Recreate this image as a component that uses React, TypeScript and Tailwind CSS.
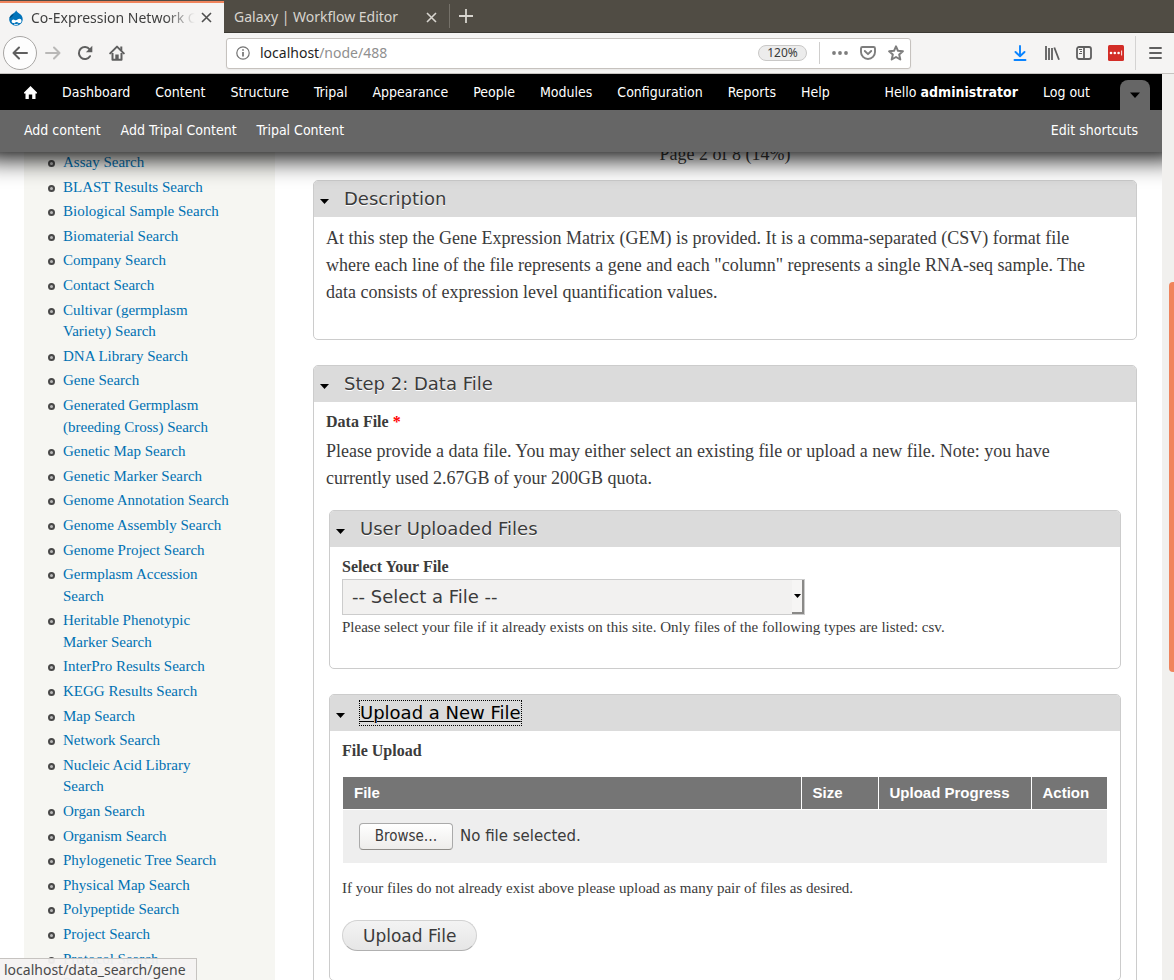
import type { ReactNode } from "react";

const ADMIN_LINKS = [
  "Dashboard",
  "Content",
  "Structure",
  "Tripal",
  "Appearance",
  "People",
  "Modules",
  "Configuration",
  "Reports",
  "Help",
];

const SHORTCUTS = ["Add content", "Add Tripal Content", "Tripal Content"];

const SEARCHES = [
  "Assay Search",
  "BLAST Results Search",
  "Biological Sample Search",
  "Biomaterial Search",
  "Company Search",
  "Contact Search",
  "Cultivar (germplasm Variety) Search",
  "DNA Library Search",
  "Gene Search",
  "Generated Germplasm (breeding Cross) Search",
  "Genetic Map Search",
  "Genetic Marker Search",
  "Genome Annotation Search",
  "Genome Assembly Search",
  "Genome Project Search",
  "Germplasm Accession Search",
  "Heritable Phenotypic Marker Search",
  "InterPro Results Search",
  "KEGG Results Search",
  "Map Search",
  "Network Search",
  "Nucleic Acid Library Search",
  "Organ Search",
  "Organism Search",
  "Phylogenetic Tree Search",
  "Physical Map Search",
  "Polypeptide Search",
  "Project Search",
  "Protocol Search",
  "Publication Search",
];

function CloseIcon() {
  return (
    <svg width="11" height="11" viewBox="0 0 11 11" fill="none" stroke="currentColor" strokeWidth="1.6">
      <path d="M1 1l9 9M10 1l-9 9" />
    </svg>
  );
}

function DrupalIcon() {
  return (
    <svg width="16" height="16" viewBox="0 0 16 16" className="shrink-0">
      <path
        d="M8.2.3c.5 1.6 1.6 2.200 3 3.200 2 1.300 3.500 3 3.500 5.800 0 3.700-3 6.400-6.600 6.400S1.200 13 1.200 9.300c0-2.700 1.500-4.300 3.500-5.500C6.400 2.800 7.600 2 8.200.3z"
        fill="#0073ba"
      />
      <path d="M1.300 8.300c.8-2 2.500-3.500 4.600-4.400-.8 1.900-2.300 3.500-4.600 4.400z" fill="#004975" />
      <path
        d="M11.400 8.800c-1.500 0-2.400 1.400-3.400 1.400-.9 0-1.500-.8-2.500-.8-1.100 0-1.900.8-1.900 1.900 0 1.100.8 1.800 1.900 1.800 1.500 0 2.200-1.200 3.200-1.200s1.500 1.200 2.800 1.200c1.300 0 2-1 2-2.200s-.8-2.100-2.100-2.100z"
        fill="#fff"
      />
      <path d="M6 14c1.300.7 3 .7 4.200 0" stroke="#fff" strokeWidth=".9" fill="none" />
    </svg>
  );
}

function TabBar() {
  return (
    <div className="flex h-[33px] shrink-0 border-b border-[#3b3933] bg-[#504c44]">
      <div className="-mb-px mt-px flex w-56 shrink-0 items-center border-t-2 border-[#f0845c] bg-[#f5f4f3] pb-px pl-2 pr-3 text-[#3f3f3f]">
        <DrupalIcon />
        <span className="ml-[7px] min-w-0 flex-1 overflow-hidden whitespace-nowrap text-sm [mask-image:linear-gradient(to_right,#000_82%,transparent)]">
          Co-Expression Network C
        </span>
        <button aria-label="Close tab" className="ml-1.5 text-[#4f4f4f]">
          <CloseIcon />
        </button>
      </div>
      <div className="flex w-[225px] shrink-0 items-center pl-2.5 pr-3 pt-0.5 text-[#d8d5cf]">
        <span className="flex-1 whitespace-nowrap text-sm">Galaxy | Workflow Editor</span>
        <button aria-label="Close tab">
          <CloseIcon />
        </button>
      </div>
      <div className="my-1 w-px bg-[#757169]" />
      <button aria-label="New tab" className="px-2 text-[#d8d5cf]">
        <svg width="16" height="16" viewBox="0 0 16 16" stroke="currentColor" strokeWidth="1.800">
          <path d="M8 1v14M1 8h14" />
        </svg>
      </button>
    </div>
  );
}

function NavBar() {
  return (
    <div className="flex h-[41px] shrink-0 items-center border-b border-[#c6c3c0] bg-[#f5f4f3] text-[#5f5f5f]">
      <button
        aria-label="Back"
        className="ml-[3px] flex size-[34px] items-center justify-center rounded-full border border-[#a8a6a4] bg-[#fdfdfd]"
      >
        <svg width="16" height="16" viewBox="0 0 16 16" fill="none" stroke="currentColor" strokeWidth="2">
          <path d="M15 8H1.500M7 2.500L1.500 8 7 13.500" strokeLinecap="round" strokeLinejoin="round" />
        </svg>
      </button>
      <button aria-label="Forward" className="ml-2 text-[#b9b8b7]">
        <svg width="16" height="16" viewBox="0 0 16 16" fill="none" stroke="currentColor" strokeWidth="2">
          <path d="M1 8h13.500M9 2.500L14.500 8 9 13.500" strokeLinecap="round" strokeLinejoin="round" />
        </svg>
      </button>
      <button aria-label="Reload" className="ml-4">
        <svg width="16" height="16" viewBox="0 0 16 16" fill="none" stroke="currentColor" strokeWidth="2">
          <path d="M13 11.200A6 6 0 1 1 12.600 4.300" strokeLinecap="round" />
          <path d="M15.300.8v6.400H8.900z" fill="currentColor" stroke="none" />
        </svg>
      </button>
      <button aria-label="Home" className="ml-4">
        <svg width="16" height="16" viewBox="0 0 16 16" fill="none" stroke="currentColor" strokeWidth="2">
          <path d="M1.200 8.400L8 1.600l6.800 6.800" strokeLinecap="round" strokeLinejoin="round" />
          <path d="M3.500 8v6.800h9V8" strokeLinejoin="round" />
          <path d="M6.300 15V9.500h3.400V15zM11.300 1.500h2v4h-2z" fill="currentColor" stroke="none" />
        </svg>
      </button>
      <div className="ml-[101px] flex h-[31px] min-w-0 flex-1 items-center rounded-[3px] border border-[#c6c2be] bg-white pl-[9px] pr-2.5 shadow-xs">
        <svg width="14" height="14" viewBox="0 0 14 14" fill="none" stroke="#737373" strokeWidth="1.200" className="shrink-0">
          <circle cx="7" cy="7" r="6.200" />
          <path d="M7 6v4.500M7 3.300v1.500" strokeWidth="1.700" />
        </svg>
        <div className="ml-2.5 flex-1 whitespace-nowrap text-sm text-[#8f8f8f]">
          <span className="text-[#1f1f1f]">localhost</span>/node/488
        </div>
        <button className="h-4 w-[49px] rounded-full border border-[#c9c8c7] bg-[#ececec] text-center text-xs leading-[14px] text-[#3a3a3a]">
          120%
        </button>
        <div className="mx-3 h-[22px] w-px bg-[#cfcecd]" />
        <button aria-label="Page actions" className="text-[#7d7d7d]">
          <svg width="16" height="16" viewBox="0 0 16 16" fill="currentColor">
            <circle cx="2" cy="8" r="1.900" />
            <circle cx="8" cy="8" r="1.900" />
            <circle cx="14" cy="8" r="1.900" />
          </svg>
        </button>
        <button aria-label="Save to Pocket" className="ml-3 text-[#7d7d7d]">
          <svg width="16" height="16" viewBox="0 0 16 16" fill="none" stroke="currentColor" strokeWidth="1.900" strokeLinecap="round" strokeLinejoin="round">
            <path d="M2.500 2h11a1.500 1.500 0 0 1 1.500 1.500V7A7 7 0 0 1 1 7V3.500A1.500 1.500 0 0 1 2.500 2z" />
            <path d="M4.800 6L8 9.200 11.200 6" />
          </svg>
        </button>
        <button aria-label="Bookmark this page" className="-mr-1 ml-3 text-[#7d7d7d]">
          <svg width="16" height="16" viewBox="0 0 16 16" fill="none" stroke="currentColor" strokeWidth="2" strokeLinejoin="round">
            <path d="M8 1.300l2 4.500 4.900.5-3.700 3.300 1.100 4.900L8 12l-4.300 2.500 1.100-4.900L1.100 6.300 6 5.800z" />
          </svg>
        </button>
      </div>
      <div className="ml-[101px] flex items-center gap-4">
        <button aria-label="Downloads" className="text-[#0a84ff]">
          <svg width="16" height="16" viewBox="0 0 16 16" fill="none" stroke="currentColor" strokeWidth="1.900" strokeLinecap="round" strokeLinejoin="round">
            <path d="M8 1v10M3.500 7L8 11.300 12.500 7M2.500 15h11" />
          </svg>
        </button>
        <button aria-label="Library">
          <svg width="16" height="16" viewBox="0 0 16 16" fill="none" stroke="currentColor" strokeWidth="1.800">
            <path d="M2 1v14M5 3v12M8 3v12M10.300 2.500L15 14.700" />
          </svg>
        </button>
        <button aria-label="Sidebars">
          <svg width="16" height="16" viewBox="0 0 16 16" fill="none" stroke="currentColor" strokeWidth="1.800">
            <rect x="1" y="2" width="14" height="12" rx="2" />
            <path d="M8 2v12" />
            <path d="M3 4.500h3M4 6.500h2M3 8.500h3" strokeWidth="1" />
          </svg>
        </button>
        <button aria-label="Password manager">
          <svg width="16" height="16" viewBox="0 0 16 16">
            <rect width="16" height="16" rx="1.500" fill="#d32d27" />
            <g fill="#fff">
              <circle cx="3" cy="8" r="1.300" />
              <circle cx="6.800" cy="8" r="1.300" />
              <circle cx="10.600" cy="8" r="1.300" />
              <rect x="13.200" y="5.500" width=".9" height="5" />
            </g>
          </svg>
        </button>
      </div>
      <div className="ml-[11px] h-[34px] w-px bg-[#d4d3d2]" />
      <button aria-label="Open menu" className="mx-3">
        <svg width="14" height="14" viewBox="0 0 14 14" stroke="currentColor" strokeWidth="1.900" strokeLinecap="round">
          <path d="M2 2h11M2 7h11M2 12h11" />
        </svg>
      </button>
    </div>
  );
}

function AdminToolbar() {
  return (
    <header className="relative z-10 -mx-5 shrink-0 whitespace-nowrap font-['DejaVu_Sans_Condensed','DejaVu_Sans',sans-serif] text-sm text-white shadow-[0_6px_26px_#000]">
      <nav aria-label="Administration" className="flex h-9 items-center gap-[25px] bg-black pl-11 pr-8">
        <a href="#home" aria-label="Home">
          <svg width="13" height="13" viewBox="0 0 13 13" fill="#fff">
            <path d="M6.500 0L0 6.500v1h1.500V13h3.300V8.500h3.400V13h3.300V7.500H13v-1z" />
          </svg>
        </a>
        {ADMIN_LINKS.map((label) => (
          <a key={label} href={`#${label.toLowerCase()}`}>
            {label}
          </a>
        ))}
        <span className="ml-auto">
          Hello <b>administrator</b>
        </span>
        <a href="#logout">Log out</a>
        <button
          aria-label="Toggle shortcuts"
          className="ml-[5px] flex h-[30px] w-[30px] items-center justify-center self-end rounded-t-lg bg-[#666]"
        >
          <svg width="10" height="6" viewBox="0 0 10 6">
            <path d="M0 .5h10L5 6z" fill="#000" />
          </svg>
        </button>
      </nav>
      <nav aria-label="Shortcuts" className="flex h-[42px] items-center gap-5 bg-[#666] px-11 pb-0.5">
        {SHORTCUTS.map((label) => (
          <a key={label} href="#shortcut">
            {label}
          </a>
        ))}
        <a href="#edit-shortcuts" className="ml-auto">
          Edit shortcuts
        </a>
      </nav>
    </header>
  );
}

function Panel({ title, focused = false, children }: { title: string; focused?: boolean; children: ReactNode }) {
  return (
    <section className="overflow-hidden rounded-[5px] border border-[#ccc] bg-white">
      <h2 className="flex h-9 items-center bg-[#dbdbdb] pl-1.5 font-['DejaVu_Sans',sans-serif] text-lg leading-6">
        <svg width="9" height="5" viewBox="0 0 9 5" className="mt-1 shrink-0">
          <path d="M0 0h9L4.500 5z" fill="#000" />
        </svg>
        <a
          href="#toggle"
          className={
            focused
              ? "ml-[15px] text-black underline decoration-1 underline-offset-2 outline-1 outline-dotted outline-black"
              : "ml-[15px] [text-shadow:0_1px_0_#fff]"
          }
        >
          {title}
        </a>
      </h2>
      <div className="px-3 pb-[29px] pt-2">{children}</div>
    </section>
  );
}

function UploadTable() {
  return (
    <div className="mx-px mt-3.5">
      <table className="w-full border-collapse text-[15px]">
        <thead>
          <tr className="h-8 border-b border-white bg-[#757575] text-left font-['Liberation_Sans',sans-serif] text-white">
            <th className="border-r border-white px-[11px]">File</th>
            <th className="w-[77px] border-r border-white px-[11px]">Size</th>
            <th className="w-[153px] border-r border-white px-[11px]">Upload Progress</th>
            <th className="w-[76px] px-[11px]">Action</th>
          </tr>
        </thead>
        <tbody>
          <tr className="h-[54px] bg-[#eee]">
            <td colSpan={4} className="px-4">
              <div className="flex items-center gap-[7px] font-['DejaVu_Sans',sans-serif] text-[15px]">
                <input id="upload" type="file" className="sr-only" />
                <label
                  htmlFor="upload"
                  className="flex h-[27px] w-[94px] items-center justify-center rounded-[4px] border border-[#aaa] border-b-[#8f8d89] bg-linear-to-b from-white to-[#eeedeb] font-['DejaVu_Sans_Condensed','DejaVu_Sans',sans-serif]"
                >
                  Browse…
                </label>
                <span>No file selected.</span>
              </div>
            </td>
          </tr>
        </tbody>
      </table>
    </div>
  );
}

function Sidebar() {
  return (
    <aside className="ml-6 w-[251px] shrink-0 bg-[#f6f6f2] pl-6 pr-11">
      <ul className="flex flex-col gap-[3px] text-[15px] leading-[1.44] text-[#0071b3]">
        {SEARCHES.map((name) => (
          <li key={name} className="flex items-start">
            <span className="mt-2 size-[7px] shrink-0 rounded-full border-2 border-[#484848] bg-[#bbb]" />
            <a href="#search" className="ml-2">
              {name}
            </a>
          </li>
        ))}
      </ul>
    </aside>
  );
}

function Content() {
  return (
    <main className="ml-[38px] mr-[25px] min-w-0 flex-1 text-lg leading-[27px]">
      <p className="-mt-[11px] mb-3 text-center">Page 2 of 8 (14%)</p>
      <Panel title="Description">
        <p className="pb-1 pr-6">
          At this step the Gene Expression Matrix (GEM) is provided. It is a comma-separated (CSV) format file where each
          line of the file represents a gene and each "column" represents a single RNA-seq sample. The data consists of
          expression level quantification values.
        </p>
      </Panel>
      <div className="h-[25px]" />
      <Panel title="Step 2: Data File">
        <h3 className="text-base font-bold leading-6">
          Data File <span className="text-[#f00]">*</span>
        </h3>
        <p className="mt-1 pr-6">
          Please provide a data file. You may either select an existing file or upload a new file. Note: you have
          currently used 2.67GB of your 200GB quota.
        </p>
        <div className="mx-[3px] mt-[18px] flex flex-col gap-[25px]">
          <Panel title="User Uploaded Files">
            <label htmlFor="file" className="block text-base font-bold leading-6">
              Select Your File
            </label>
            <div className="relative h-9 w-[463px] max-w-full">
              <select
                id="file"
                className="size-full appearance-none border border-[#ccc] bg-[#f2f1f0] px-[9px] font-['DejaVu_Sans',sans-serif] text-lg leading-6"
              >
                <option>-- Select a File --</option>
              </select>
              <span className="pointer-events-none absolute inset-y-px right-px flex w-3 items-center justify-center border-b-2 border-r-2 border-[#8a8987] bg-[#f6f5f4]">
                <svg width="7" height="4" viewBox="0 0 7 4">
                  <path d="M0 0h7L3.500 4z" fill="#000" />
                </svg>
              </span>
            </div>
            <p className="text-[15px] leading-6">
              Please select your file if it already exists on this site. Only files of the following types are listed: csv.
            </p>
          </Panel>
          <Panel title="Upload a New File" focused>
            <h3 className="text-base font-bold leading-6">File Upload</h3>
            <UploadTable />
            <p className="mt-[13px] text-[15px] leading-6">
              If your files do not already exist above please upload as many pair of files as desired.
            </p>
            <button className="mt-5 block h-[31px] rounded-full border border-[#d2d2d2] border-b-[#b0b0b0] bg-linear-to-b from-[#f3f3f3] to-[#e6e6e6] px-5 font-['DejaVu_Sans',sans-serif] text-[17px] leading-5">
              Upload File
            </button>
          </Panel>
        </div>
      </Panel>
    </main>
  );
}

export default function App() {
  return (
    <div className="relative flex h-screen flex-col overflow-hidden bg-white font-['Noto_Sans',sans-serif]">
      <TabBar />
      <NavBar />
      <div className="flex min-h-0 flex-1">
        <div className="flex min-w-0 flex-1 flex-col overflow-hidden">
          <AdminToolbar />
          <div className="flex min-h-0 flex-1 overflow-hidden font-['Liberation_Serif',serif] text-[#3b3b3b]">
            <Sidebar />
            <Content />
          </div>
        </div>
        <div className="flex w-3 shrink-0 flex-col items-end bg-[#f1f0ee]">
          <div className="grow-[208]" />
          <div className="w-[5px] grow-[390] rounded-l-sm bg-[#f0845c]" />
          <div className="grow-[308]" />
        </div>
      </div>
      <div className="absolute bottom-0 left-0 z-20 h-[22px] border-r border-t border-[#c6c3c0] bg-[#f4f2f1]/95 pl-1 pr-2.5 text-sm leading-[21px] text-[#4a4a4a]">
        localhost/data_search/gene
      </div>
    </div>
  );
}
